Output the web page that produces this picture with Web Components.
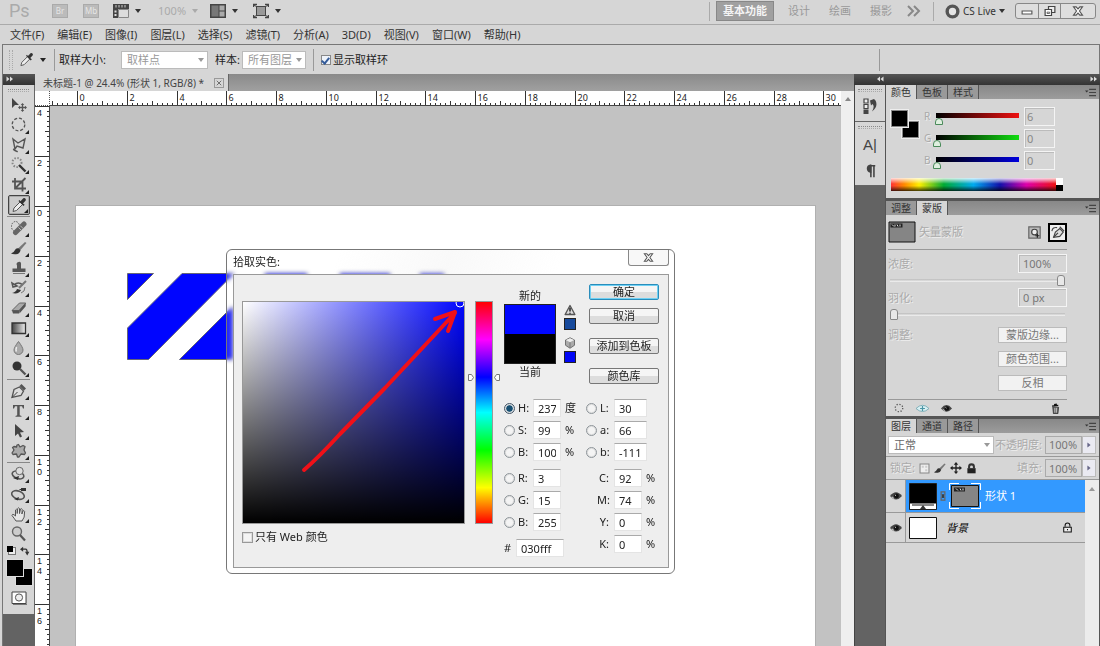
<!DOCTYPE html>
<html lang="zh-CN">
<head>
<meta charset="utf-8">
<title>未标题-1</title>
<style>
html,body{margin:0;height:100%;overflow:hidden;background:#d6d6d6}
body{font:11px/16px "Noto Sans","Noto Sans CJK SC",sans-serif;color:#222}
</style>
</head>
<body>
<ps-app></ps-app>
<script>
const BASE = `*{box-sizing:border-box}
:host{display:block}
button,input,select{font:inherit;color:inherit;margin:0;padding:0;border:0;background:none;border-radius:0;outline:none}
select,input[type=checkbox],input[type=radio],input[type=range]{appearance:none;-webkit-appearance:none}
svg{display:block}`;
function define(name, css, html, setup) {
  const t = document.createElement('template');
  t.innerHTML = `<style>${BASE}${css}</style>${html}`;
  customElements.define(name, class extends HTMLElement {
    constructor() {
      super();
      this.attachShadow({ mode: 'open' }).append(t.content.cloneNode(true));
    }
    connectedCallback() { if (setup) setup(this, this.shadowRoot); }
  });
}

/* Icon set, drawn on a 16 unit grid */
const G = 'fill="none" stroke="#555" ';
const ICONS = {
  move: '<path d="M1 1v10l3-3 4 0z" fill="#444"/><path d="M8 10.500h7M11.500 7v7" stroke="#555" stroke-width="1.300"/><path d="M7 10.500l2-1.700v3.400zM16 10.500l-2-1.700v3.400zM11.500 6l1.700 2h-3.400zM11.500 15l1.700-2h-3.400z" fill="#555"/>',
  marquee: `<circle cx="7.500" cy="7.500" r="6.300" ${G} stroke-width="1.300" stroke-dasharray="3 1.900"/>`,
  lasso: `<path d="M2 2l5 4 7-4-2 9-6-2-2 3zM4 12q-3 0 0 1.500t2 1" ${G} stroke-width="1.400"/>`,
  wand: `<circle cx="6" cy="5.500" r="4.500" fill="none" stroke="#888" stroke-width="2" stroke-dasharray="1.500 1.500"/><path d="M8 8l6.500 6.500" stroke="#333" stroke-width="2.400"/>`,
  crop: `<path d="M4 1v10.500h11M1 4.500h10.500v10M4 11.500L14.500 1" ${G} stroke-width="1.800"/>`,
  eyedrop: '<path d="M2 14.500l1-3.500 6-6 2.500 2.500-6 6z" fill="#eee" stroke="#555"/><path d="M7.500 4l5 5 1.200-1.200L12 6.500l2.700-3q.6-1.700-.8-2.300T11.600 2L9.500 4.300 8.500 3z" fill="#333"/>',
  heal: '<ellipse cx="4.500" cy="6.500" rx="4" ry="5" fill="none" stroke="#555" stroke-dasharray="1.500 1.200"/><path d="M4.500 12.500L13 4" stroke="#666" stroke-width="5" stroke-linecap="round"/><path d="M7.500 7.500l3 3M9.300 5.700l3 3" stroke="#bbb"/>',
  brush: '<path d="M7 8.500l7-6.500 1.500 1-6.500 7.500z" fill="#777"/><path d="M0 13.500q3-1 4-3.500t4-1.500l1.500 2q-1 3.500-4.500 3.700T0 13.500z" fill="#333"/>',
  stamp: '<path d="M6 8.500V5.500Q4.500 3 7.500 2T10 5.500v3h4.500V12h-13V8.500z" fill="#555"/><path d="M2 13.500h12" stroke="#777"/>',
  history: '<path d="M3 5q4-4 9 0M1 3l1 4 4-1z" fill="none" stroke="#555" stroke-width="1.500"/><path d="M15 1L8 8" stroke="#777" stroke-width="2"/><path d="M1 13q4-1 5-4l4 1q-2 4.500-9 3z" fill="#333"/><path d="M14 7q0 5-4 6" fill="none" stroke="#777"/>',
  eraser: '<path d="M1 10.500L8.500 3h6.200L8 10.500z" fill="#aaa" stroke="#666"/><path d="M1 10.500h7v3H2zM8 10.500L14.700 3v3.200L8.500 13.500z" fill="#555"/>',
  gradient: '<defs><linearGradient id="a"><stop stop-color="#444"/><stop offset="1" stop-color="#eee"/></linearGradient></defs><path d="M1 3h13.500v10.500H1z" fill="url(#a)" stroke="#333" stroke-width="1.300"/>',
  drop: '<path d="M7.500 1.500Q12 7.500 12 10a4.400 4.400 0 0 1-9 0Q3 7.500 7.500 1.500z" fill="#aaa" stroke="#777"/><path d="M5.500 7q-1 3 0 4.500" stroke="#eee" stroke-width="1.500" fill="none"/>',
  dodge: '<circle cx="6" cy="6" r="4.500" fill="#333"/><path d="M9 9l5.500 5.500" stroke="#555" stroke-width="2.300"/>',
  pen: '<path d="M1 14.500l2-8 5.500-2.500 4 4-2.500 4.500z" fill="#ddd" stroke="#555" stroke-width="1.300"/><path d="M1 14.500l5.500-5.500" stroke="#444"/><path d="M8.500 3L10.500 1l4.500 4.500-2 2z" fill="#555"/>',
  type: '<path d="M2 2h11v3.500h-1L11 3.300H8.700v9l1.800.6v.8h-6v-.8l1.700-.6v-9H4L3 5.500H2z" fill="#555"/>',
  select: '<path d="M4 1v12l3-2.500 2 4 2-1-2-4 4-.5z" fill="#444"/>',
  shape: '<path d="M6 2l1.500-.5L9 4l3-1.500 2 1L13 7l1.500 3-1 1.500-3.500-.5-2 3-1.500 0-1-3L2 11.500 1 10l2-3-1.500-2.500L3 3.500l2.500.5z" fill="#aaa" stroke="#555" stroke-width="1.300" stroke-linejoin="round"/>',
  rotate3d: '<ellipse cx="7" cy="9" rx="6" ry="3.500" transform="rotate(20 7 9)" fill="none" stroke="#555" stroke-width="1.600"/><circle cx="8.500" cy="5" r="3.700" fill="#ddd" stroke="#666"/><path d="M2 12l5 2 1-4z" fill="#333"/>',
  orbit3d: '<ellipse cx="7" cy="9" rx="6.500" ry="4" transform="rotate(20 7 9)" fill="none" stroke="#555" stroke-width="1.600"/><path d="M10 2h5v3h-5zM8.500 3h2v1h-2zM3 13l4 1.500L8 11z" fill="#333"/>',
  hand: '<path d="M5 15Q3 12 1 9.500q0-1.700 2-.8L4.500 10V4q1-1.500 1.700 0V7.500L6.700 2.500q1-1.500 1.800 0V7.500L9.500 3q1.200-1 1.700.4L10.900 8l1-3q1.200-1 1.700.4Q14 12 11 15z" fill="#e6e6e6" stroke="#555"/>',
  zoom: '<circle cx="6" cy="5.500" r="4.500" fill="#ccc" stroke="#666" stroke-width="1.400"/><path d="M9 9l5 5.500" stroke="#555" stroke-width="2.200"/>',
  swap: '<path d="M3 5h6q2.500 0 2.500 6" fill="none" stroke="#333" stroke-width="2"/><path d="M5 1L0 5l5 4zM8 9h7l-3.500 6z" fill="#333"/>',
  quick: '<path d="M1 2h14v11.500H1z" fill="#fff" stroke="#444"/><circle cx="8" cy="7.500" r="3.600" fill="#eee" stroke="#555"/><path d="M16 3v11.500H2" fill="none" stroke="#777"/>',
  eye: '<path d="M0 8q8-10 16 0-8 9.500-16 0z" fill="#444"/><circle cx="8.500" cy="8" r="3.300" fill="#111"/><path d="M2.500 9l3 2.500M6.500 6.500l1.500 1" stroke="#eee" stroke-width="1.200"/>',
  eyeblue: '<path d="M0 8q8-8 16 0-8 7.500-16 0z" fill="#d9f0f3" stroke="#6fa5b0"/><path d="M8 5v6M5 8h6" stroke="#4b96a6" stroke-width="1.500"/>',
  dotted: '<circle cx="8" cy="8" r="6" fill="none" stroke="#555" stroke-width="2" stroke-dasharray="2 2.700"/>',
  trash: '<path d="M4 6h8.500l-1 9.500H5z" fill="#666" stroke="#222"/><path d="M3 4.500l9-1M6 2.500l4-.8" stroke="#111" stroke-width="2"/><path d="M7 7v7M9.500 7v7" stroke="#ddd"/>',
  lock: '<path d="M2 7.500h12V15H2z" fill="#222"/><path d="M4.500 8V5.500q0-3.500 3.500-3.500t3.500 3.500V8" fill="none" stroke="#333" stroke-width="3"/>',
  lockline: '<path d="M2.500 7.500h11v7h-11z" fill="#eee" stroke="#111" stroke-width="1.500"/><path d="M4.500 7V5q0-3.500 3.500-3.500T11.500 5v2M8 10v2" fill="none" stroke="#111" stroke-width="1.500"/>',
  cross: '<path d="M8 2v12M2 8h12" stroke="#222" stroke-width="1.800"/><path d="M8 0l3 3.500H5zM8 16l3-3.500H5zM0 8l3.500-3v6zM16 8l-3.500-3v6z" fill="#222"/>',
  check: '<path d="M1.500 1.500h13v13h-13z" fill="#eee" stroke="#888" stroke-width="1.500"/><path d="M4 4h3v3H4zM9 9h3v3H9zM9 4h3v3H9z" fill="#ccc"/>',
  layout: '<path d="M0 1h16v5H0zM0 1h5v14H0z" fill="#444"/><path d="M5.500 6.500h10v8h-10z" fill="#ddd" stroke="#888"/><path d="M1.500 7.500h2v2h-2zM1.500 11h2v2h-2z" fill="#ddd"/><path d="M3 2v2.500M6 2v2.500M9 2v2.500M12 2v2.500" stroke="#ccc"/>',
  arrange: '<path d="M0 1h16v14H0z" fill="#444"/><path d="M1.500 2.500h7v11h-7z" fill="#777"/><path d="M9.500 2.500h5v5h-5zM9.500 8.500h5v5h-5z" fill="#aaa"/>',
  screen: '<path d="M3.500 3.500h9v9h-9z" fill="#999" stroke="#444"/><path d="M0.500 4V1.500H4M12 1.500h3.500V4M15.500 12v2.500H12M4 14.500H.5V12" fill="none" stroke="#444" stroke-width="1.500"/><path d="M1 2l3 2M15 2l-3 2M1 14l3-2M15 14l-3-2" stroke="#444"/>',
  ring: '<circle cx="8" cy="8" r="5.700" fill="#e4e4e4" stroke="#555" stroke-width="3.600"/>',
  chevs: '<path d="M2 3l5 5-5 5M8 3l5 5-5 5" fill="none" stroke="#888" stroke-width="2"/>',
  hist: '<path d="M2 1h4v4H2zM2 6.500h4v4H2z" fill="#eee" stroke="#444" stroke-width="1.200"/><path d="M1.500 11.500h5V16h-5z" fill="#444"/><path d="M8 2.500L12 1l1.500 1.500q3 6-3.500 11 3-5 .5-7.500L9 7.500z" fill="#444"/>',
  para: '<path d="M9 15V2M12.500 15V2M14 2H7" stroke="#444" stroke-width="1.800" fill="none"/><path d="M8.500 1.500A3.800 3.800 0 0 0 8.500 9z" fill="#444" stroke="#444" stroke-width="2"/>',
  warn: '<path d="M8 2l6.500 12h-13z" fill="#ddd" stroke="#555" stroke-width="1.800" stroke-linejoin="round"/><path d="M8 5v5M8 11.500v1.500" stroke="#222" stroke-width="2"/>',
  cube: '<path d="M8 1l6 3v7l-6 4-6-4V4z" fill="#aaa" stroke="#666" stroke-width="1.200"/><path d="M2.500 4L8 7l5.500-3L8 1.500z" fill="#eee"/><path d="M8 7v7" stroke="#666"/>',
  x: '<path d="M2 2.500h3.500L8 5.300l2.500-2.800H14L10 8l4 5.500h-3.500L8 10.700l-2.500 2.800H2L6 8z" fill="#fff" stroke="#555" stroke-width="1.500"/>',
  tabx: '<path d="M2 2l12 12M14 2L2 14" stroke="#666" stroke-width="2.500"/>',
  min: '<path d="M1.500 8h13v4h-13z" fill="#fff" stroke="#555" stroke-width="1.500"/>',
  restore: '<path d="M6 2h8.500v8H6z" fill="#eee" stroke="#444" stroke-width="1.600"/><path d="M1.500 6H10v8H1.500z" fill="#fff" stroke="#444" stroke-width="1.600"/><path d="M4 9.500h3.500v1.800H4z" fill="#fff" stroke="#444"/>',
  menu: '<path d="M0 5h5L2.500 8z" fill="#333"/><path d="M6 3.500h10M6 8h10M6 12.500h10" stroke="#444" stroke-width="1.700"/>',
  link: '<path d="M5 1.500h6v5H5zM5 9.500h6v5H5z" fill="none" stroke="#666" stroke-width="2"/><path d="M8 5v6" stroke="#222" stroke-width="2"/>',
  mask: '<path d="M1 1h14v14H1z" fill="#bbb" stroke="#666" stroke-width="1.500"/><circle cx="8" cy="7.500" r="3.500" fill="#eee" stroke="#444" stroke-width="1.500"/><path d="M9 12h5M11.500 9.500v5" stroke="#222" stroke-width="1.500"/>',
  vmask: '<path d="M3 14l2-6 5-4 4 4-4 5z" fill="#ddd" stroke="#444" stroke-width="1.300"/><path d="M3 14l5-5M10 2l5 5M1 7q1-5 6-4" stroke="#444" stroke-width="1.300" fill="none"/>',
  collapse: '<path d="M8 3L2 8l6 5zM15 3L9 8l6 5z" fill="#ddd"/>',
  expand: '<path d="M1 3l6 5-6 5zM8 3l6 5-6 5z" fill="#ddd"/>'
};
customElements.define('ps-icon', class extends HTMLElement {
  connectedCallback() {
    if (this.shadowRoot) return;
    const s = this.getAttribute('size') || 16;
    this.attachShadow({ mode: 'open' }).innerHTML =
      `<style>:host{display:block;flex:none;width:${s}px;height:${s}px}svg{display:block}</style>
       <svg width="${s}" height="${s}" viewBox="0 0 16 16" aria-hidden="true">${ICONS[this.getAttribute('name')]}</svg>`;
  }
});
define('drop-arrow', ':host{flex:none;width:0;height:0;border:3px solid transparent;border-top:4px solid currentColor;border-bottom:0}', '');
define('tool-grip', ':host{height:3px;border-top:1px dotted #888;border-bottom:1px dotted #aaa;margin:4px 4px}', '');

define('app-bar', `
:host{display:flex;align-items:center;height:24px;padding:0 4px 2px 9px;color:#333}
nav,.r{display:flex;align-items:center}
.logo{font:18px/22px Roboto,sans-serif;color:#aaa;width:43px}
.sq{width:16px;height:14px;font-size:8px;line-height:12px;justify-content:center;background:#bbb;border:1px solid #aaa;color:#e6e6e6}
.sq+.sq{margin-left:15px}
.g{color:#aaa;margin-left:17px;margin-right:10px;line-height:16px}
button{display:flex;align-items:center;gap:6px}
.r{margin-left:auto;color:#999}
.sep{width:1px;height:19px;background:#aaa}
.on{background:#a0a0a0;border:1px solid #888;color:#f4f4f4;font-weight:700;height:20px;padding:0 6px;margin:0 14px 0 6px}
.live{margin:0 10px 0 11px;color:#333;gap:3px;font-size:10px}
.win{display:flex;border:1px solid #888;border-radius:3px;height:16px;background:#dedede}
.win button{justify-content:center;width:22px}.win button+button{border-left:1px solid #888}.win button:last-child{width:35px}
`, `
<span class="logo">Ps</span>
<nav>
<button class="sq">Br</button><button class="sq">Mb</button>
<button style="margin-left:14px" aria-label="视图额外内容"><ps-icon name="layout"></ps-icon><drop-arrow></drop-arrow></button>
<button class="g">100%<drop-arrow></drop-arrow></button>
<button style="margin-left:2px" aria-label="排列文档"><ps-icon name="arrange"></ps-icon><drop-arrow></drop-arrow></button>
<button style="margin-left:15px" aria-label="屏幕模式"><ps-icon name="screen"></ps-icon><drop-arrow></drop-arrow></button>
</nav>
<div class="r"><i class="sep"></i><button class="on">基本功能</button>
<button>设计</button><button style="margin-left:19px">绘画</button><button style="margin-left:19px">摄影</button>
<button style="margin:0 11px 0 14px" aria-label="更多"><ps-icon name="chevs"></ps-icon></button><i class="sep"></i>
<button class="live"><ps-icon name="ring" size="15"></ps-icon>CS Live<drop-arrow></drop-arrow></button>
<div class="win"><button aria-label="最小化"><ps-icon name="min" size="12"></ps-icon></button><button aria-label="还原"><ps-icon name="restore" size="12"></ps-icon></button><button aria-label="关闭"><ps-icon name="x" size="12"></ps-icon></button></div></div>`);

define('menu-bar', `
:host{display:flex;align-items:center;gap:13px;height:20px;padding-left:10px;border-top:1px solid #aaa;color:#333}`,
['文件(F)','编辑(E)','图像(I)','图层(L)','选择(S)','滤镜(T)','分析(A)','3D(D)','视图(V)','窗口(W)','帮助(H)'].map(t => `<button>${t}</button>`).join(''));

define('options-bar', `
:host{display:flex;align-items:center;height:30px;margin-left:2px;padding:0 0 0 6px;border:1px solid #777;border-width:1px 1px 0 1px}
.sep{width:1px;height:22px;background:#999}
tool-grip{width:4px;height:20px;border:1px dotted #aaa;border-width:0 1px;margin:0 6px 0 0}
.sel{position:relative;display:flex;align-items:center;color:#999;margin:0 7px 0 2px}
select{height:18px;padding:0 5px;background:#fff;border:1px solid #bbb;width:64px;line-height:16px}
.sel.w{margin-left:15px}.w select{width:87px}
.sel drop-arrow{position:absolute;right:4px}
.cb{width:10px;height:10px;background:#eef3fa;border:1px solid #888;margin:0 2px 0 7px;display:grid;place-items:center}
.cb:checked::before{content:"";width:3px;height:6px;border:solid #345c9a;border-width:0 2px 2px 0;transform:rotate(40deg)}
.end{margin-left:auto;margin-right:219px}`, `
<tool-grip></tool-grip><ps-icon name="eyedrop" size="15"></ps-icon><drop-arrow style="margin:0 8px 0 6px"></drop-arrow><i class="sep"></i>
<label for="sz" style="margin-left:4px">取样大小:</label><span class="sel w"><select id="sz"><option>取样点</option></select><drop-arrow></drop-arrow></span>
<label for="sm">样本:</label><span class="sel"><select id="sm"><option>所有图层</option></select><drop-arrow></drop-arrow></span>
<i class="sep"></i><input class="cb" type="checkbox" id="rg" checked><label for="rg">显示取样环</label><i class="sep end"></i>`);

define('tool-button', `
button{display:grid;place-items:center;width:22px;height:20px;margin:0 auto;position:relative;border-radius:2px}
:host([active]) button{border:1px solid #444;background:#ccc;box-shadow:inset 0 0 0 1px #aaa}
:host([more]) button::after{content:"";position:absolute;right:1px;bottom:1px;border:2px solid transparent;border-right-color:#222;border-bottom-color:#222}`,
`<button></button>`, (h, r) => {
  const b = r.querySelector('button'), i = document.createElement('ps-icon');
  b.setAttribute('aria-label', h.getAttribute('icon'));
  i.setAttribute('name', h.getAttribute('icon'));
  b.replaceChildren(i);
});

const tools = (list) => list.split(' ').map(n => `<tool-button icon="${n}" ${n === 'zoom' || n === 'move' ? '' : 'more'} ${n === 'eyedrop' ? 'active' : ''}></tool-button>`).join('');
define('tool-box', `
:host{background:#636363;border-left:1px solid #777}
.head{height:11px;background:linear-gradient(#555,#333);padding:1px 3px}
.body{background:#d6d6d6;border-right:1px solid #666;padding-bottom:8px;display:flow-root}
tool-grip{margin:4px 5px 3px}
hr{border:0;border-top:1px solid #888;margin:1px 4px}
.mini{display:flex;justify-content:space-between;padding:2px 4px 0;height:14px}
.dd{width:6px;height:6px;background:#000;box-shadow:2px 2px 0 #eee,2px 2px 0 1px #777}
.sw{display:grid;width:25px;height:25px;margin:2px 0 5px 4px}
.sw i{grid-area:1/1;width:16px;height:16px;background:#000;outline:1px solid #ddd}
.sw i:first-child{place-self:end}
.sw i:last-child{z-index:1}`, `
<div class="head"><ps-icon name="expand" size="8"></ps-icon></div>
<div class="body"><tool-grip></tool-grip>
${tools('move marquee lasso wand crop eyedrop')}<hr>${tools('heal brush stamp history eraser gradient drop dodge')}<hr>
${tools('pen type select shape')}<hr>${tools('rotate3d orbit3d hand zoom')}
<div class="mini"><i class="dd"></i><ps-icon name="swap" size="10"></ps-icon></div>
<div class="sw"><i></i><i></i></div>
<ps-icon name="quick" style="margin:0 auto"></ps-icon></div>`);

/* Ruler: labels every two units, one minor tick per fifth of a unit */
customElements.define('doc-ruler', class extends HTMLElement {
  connectedCallback() {
    if (this.shadowRoot) return;
    this.attachShadow({ mode: 'open' }).innerHTML = `<style>:host{display:block;overflow:hidden;background:#fff;
      border:0 solid #444;border-bottom-width:1px}:host([vertical]){border-width:0 1px 0 0}
      svg{display:block;width:100%;height:100%}
      text{font:9px "Noto Sans",sans-serif;fill:#222}:host([vertical]) text{font-family:"Liberation Sans",sans-serif}</style><svg></svg>`;
    this.draw();
    new ResizeObserver(() => this.draw()).observe(this);
  }
  draw() {
    const v = this.hasAttribute('vertical'), o = +this.getAttribute('origin'), u = 24.88;
    const box = this.getBoundingClientRect(), size = v ? box.height : box.width;
    let d = '', t = '';
    for (let k = -20; ; k++) {
      const p = Math.round(o + k * u / 5) + .5;
      if (p < 0) continue;
      if (p > size) break;
      const len = k % 10 === 0 ? 15 : k % 5 === 0 ? 5 : 3;
      d += v ? `M${15 - len} ${p}h${len}` : `M${p} ${15 - len}v${len}`;
      if (k % 10) continue;
      const n = String(Math.abs(k / 5));
      if (v) [...n].forEach((c, i) => { if (p + 12 + i * 10 < size) t += `<text x="2" y="${p + 9 + i * 10}">${c}</text>`; });
      else if (p + 14 < size) t += `<text x="${p + 2}" y="10">${n}</text>`;
    }
    this.shadowRoot.querySelector('svg').innerHTML = `<path d="${d}" stroke="#333"/>${t}`;
  }
});

define('doc-window', `
:host{display:grid;grid-template-rows:17px 1fr;min-width:0}
.tabs{background:linear-gradient(#8a8a8a,#a0a0a0)}
.tab{display:inline-flex;align-items:center;gap:10px;height:17px;padding:0 4px 0 8px;background:#d6d6d6;border-right:1px solid #666;color:#444;font-size:10px;vertical-align:top}
.tab button{width:10px;height:10px;border:1px solid #999;display:grid;place-items:center}
.view{display:grid;grid-template:15px 1fr/15px 1fr 13px;min-height:0}
.corner{background:#fff;border-right:1px dotted #555;border-bottom:1px dotted #555}
.bar{grid-area:1/3/3/4;background:#efefef;color:#888;display:flex;justify-content:center;padding-top:6px}
.bar drop-arrow{transform:rotate(180deg)}
.canvas{position:relative;background:#c2c2c2;padding:100px 26px 0;overflow:hidden;display:grid}
.page{background:#fff;box-shadow:0 0 0 1px #b0b0b0;padding:67px 0 0 51px}
color-picker{position:absolute;left:176px;top:143px}`, `
<div class="tabs"><span class="tab">未标题-1 @ 24.4% (形状 1, RGB/8) *<button aria-label="关闭"><ps-icon name="tabx" size="6"></ps-icon></button></span></div>
<div class="view"><i class="corner"></i><doc-ruler origin="27"></doc-ruler><i class="bar"><drop-arrow></drop-arrow></i>
<doc-ruler vertical origin="100"></doc-ruler>
<div class="canvas"><div class="page"><svg width="320" height="87" fill="#0005ff" stroke="#667" stroke-width="1">
<path d="M.5.5h26l-26 26zM.5 55L55 .5h52L21.500 86.500H.5zM52.500 86.500L105 34h1v52.500z"/><path d="M138 .5h42v40h-42zM213 .5h50v40h-50zM293 .5h24v40h-24z"/></svg></div>
<color-picker></color-picker></div></div>`);

const radio = (id, l, v, u, on) => `<input type="radio" name="ch" id="r${id}" ${on ? 'checked' : ''}><label for="r${id}">${l}:</label><input class="t" aria-label="${l}" value="${v}"><span>${u}</span>`;
const cmyk = (l, v) => `<label class="k" for="k${l}">${l}:</label><input class="t s" id="k${l}" value="${v}"><span>%</span>`;
define('color-picker', `
:host{width:449px;border:1px solid #777;border-radius:6px;background:linear-gradient(110deg,rgba(255,255,255,.15) 0 20%,rgba(235,235,235,.3) 40%,rgba(255,255,255,.15) 60%);backdrop-filter:blur(2px);padding:0 5px 5px 6px;color:#222}
header{display:flex;justify-content:space-between;height:24px}
h1{font:inherit;margin:4px 0 0}
header button{width:41px;height:16px;border:1px solid #888;border-top:0;border-radius:0 0 3px 3px;background:#f8f8f8;display:grid;place-items:center}
.in{display:grid;grid-template-columns:223px 18px 160px;column-gap:10px;border:1px solid #999;background:#eee;padding:26px 0 0 8px;height:294px;align-content:start}
.field{position:relative;height:223px;border:1px solid #999;background:linear-gradient(transparent,#000),linear-gradient(90deg,#fff,#0006ff)}
.field svg{position:absolute;left:0;top:0}
.hue{position:relative;height:223px;border:1px solid #999;background:linear-gradient(red,#f0f 17%,#00f 34%,#0ff 50%,#0f0 67%,#ff0 84%,red)}
.hue svg{position:absolute;left:-9px;top:71px}
.web{display:flex;align-items:center;gap:2px;height:24px;margin-top:1px}
input[type=checkbox]{width:11px;height:11px;border:1px solid #999;background:#f4f4f4;box-shadow:inset 0 0 0 1px #ddd}
.right{margin-top:-17px;padding-left:1px}
.top{display:grid;grid-template-columns:52px 13px 70px;column-gap:7px;height:107px}
.prev{text-align:center;margin-top:4px;line-height:16px}
.prev i{display:block;border:1px solid #222;height:60px;background:linear-gradient(#0006ff 50%,#000 50%)}
.warn{padding-top:20px;display:grid;justify-items:center;align-content:start;row-gap:2px}
.warn i{width:12px;height:12px;border:1px solid #222}
.warn i:nth-child(2){background:#174a9c;margin-bottom:5px}.warn i:last-child{background:#0006f6}
.btns{display:grid;align-content:start;margin-left:6px}
.btns button{width:70px;height:16px;line-height:14px;border:1px solid #777;border-radius:2px;background:linear-gradient(#f5f5f5 50%,#ddd 50%);margin-bottom:8px;white-space:nowrap}
.btns button:first-child{border-color:#2a8dbb;box-shadow:inset 0 0 0 1px #6fd0f3}
.btns button:nth-child(n+2){margin-bottom:14px}
.vals{display:grid;grid-template-columns:96px 1fr;margin-top:8px}
.row{display:flex;align-items:center;height:18px;margin-bottom:4px;white-space:nowrap}
.row.gap{margin-top:8px}
input[type=radio]{flex:none;width:11px;height:11px;border-radius:50%;border:1px solid #8d9499;background:#f4f4f4;box-shadow:inset 0 0 0 1px #ddd}
input[type=radio]:checked{background:radial-gradient(#174f72 0 45%,#d6e6ee 60%);border-color:#456}
.row label{width:18px;padding-left:3px}
.t{height:18px;background:#fff;border:1px solid #e4e4e4;border-top-color:#aaa;padding:0 4px;width:33px}
.l .t{width:28px}
.row span{padding-left:4px}
.r label{width:17px}.r input[type=radio]{margin-left:-14px}
.row label.k{padding:0 5px 0 0;text-align:right;width:17px;margin:0 0 0 -3px}
.t.s{width:28px}.l .hex{width:48px;margin-left:2px}
.l .row:last-child label{width:10px;padding:0}`, `
<header><h1>拾取实色:</h1><button aria-label="关闭"><ps-icon name="x" size="11"></ps-icon></button></header>
<div class="in">
<div><div class="field"><svg width="221" height="221"><circle cx="217" cy="1" r="4" fill="none" stroke="#fff"/><path d="M61 168Q76 155 97 132L142 86 212 11M192 17L212 10 205 29" fill="none" stroke="#f01018" stroke-width="4" stroke-linecap="round" stroke-linejoin="round"/></svg></div>
<div class="web"><input type="checkbox" id="w"><label for="w">只有 Web 颜色</label></div></div>
<div class="hue"><svg width="34" height="9" fill="#fff" stroke="#777"><path d="M1.500 1.500h3l2 3-2 3h-3zM32.500 1.500h-3l-2 3 2 3h3z"/></svg></div>
<div class="right"><div class="top"><div class="prev">新的<i></i>当前</div>
<div class="warn"><ps-icon name="warn" size="12"></ps-icon><i></i><ps-icon name="cube" size="12"></ps-icon><i></i></div>
<div class="btns"><button>确定</button><button>取消</button><button>添加到色板</button><button>颜色库</button></div></div>
<div class="vals"><div class="l">
<div class="row">${radio('H','H',237,'度',1)}</div><div class="row">${radio('S','S',99,'%')}</div><div class="row">${radio('V','B',100,'%')}</div>
<div class="row gap">${radio('R','R',3,'')}</div><div class="row">${radio('G','G',15,'')}</div><div class="row">${radio('B','B',255,'')}</div>
<div class="row gap"><label for="hx">#</label><input class="t hex" id="hx" value="030fff"></div></div>
<div class="r"><div class="row">${radio('L','L',30,'')}</div><div class="row">${radio('a','a',66,'')}</div><div class="row">${radio('b','b',-111,'')}</div>
<div class="row gap">${cmyk('C',92)}</div><div class="row">${cmyk('M',74)}</div><div class="row">${cmyk('Y',0)}</div><div class="row">${cmyk('K',0)}</div></div></div></div>
</div>`);

define('dock-strip', `
:host{background:#636363;border-left:1px solid #444}
div{background:#d6d6d6;display:flow-root;border-bottom:1px solid #666;padding-bottom:4px}
div+div{padding-bottom:1px}
tool-grip{margin:4px 3px 3px}
button{display:grid;place-items:center;width:100%;height:22px;font:15px/18px "Liberation Sans",sans-serif;color:#444}
div+div button{height:26px}`, `
<div><tool-grip></tool-grip><button aria-label="历史记录"><ps-icon name="hist"></ps-icon></button></div>
<div><tool-grip></tool-grip><button>A|</button><button aria-label="段落"><ps-icon name="para" size="14"></ps-icon></button></div>`);

define('ps-panel', `
:host{border:1px solid #555;border-width:0 1px 3px;background:#d6d6d6}
:host(:last-child){border-bottom:0}
.tabs{display:flex;height:14px;background:linear-gradient(#888,#9c9c9c);font-size:10px}
.tabs button{height:14px;line-height:14px;padding:0 5px;border-right:1px solid #555;color:#333;background:#999}
.tabs button.on{background:#d6d6d6}
.tabs ps-icon{margin:2px 3px 0 auto}`, `<div class="tabs"></div><slot></slot>`, (h, r) => {
  const t = r.querySelector('.tabs');
  t.innerHTML = h.getAttribute('tabs').split(' ').map((n, i) => `<button class="${i == (h.getAttribute('on') || 0) ? 'on' : ''}">${n}</button>`).join('') + '<ps-icon name="menu" size="11"></ps-icon>';
});

const chan = (l, v, c) => `<div class="ch"><label for="${l}">${l}</label><input type="range" aria-label="${l}" max="255" value="${v}" style="--c:${c}"><input class="n" id="${l}" value="${v}"></div>`;
define('color-panel', `
:host{padding:7px 35px 7px 5px}
.m{display:grid;grid-template-columns:28px minmax(0,1fr);column-gap:5px;margin-right:9px}
.sw{display:grid;width:28px;height:28px;margin-top:4px}
.sw i{grid-area:1/1;width:17px;height:17px;background:#000;border:1px solid #888;outline:1px solid #eee}
.sw i:first-child{place-self:end}.sw i:last-child{z-index:1}
.ch{display:flex;align-items:center;height:20px;margin-bottom:2px}
label{flex:none;width:12px;color:#aaa;text-shadow:1px 1px #eee;font-size:10px}
input[type=range]{flex:1;min-width:0;height:18px;background:linear-gradient(90deg,#000,var(--c)) 0 6px/100% 5px no-repeat;margin-right:5px}
input::-webkit-slider-thumb{-webkit-appearance:none;width:8px;height:7px;margin:11px 0 0 -3px;background:#dfefdf;border:1px solid #4a8a5a;border-radius:5px 5px 0 0}
.n{flex:none;width:31px;height:19px;border:1px solid #f4f4f4;padding-left:2px;color:#888;box-shadow:inset 1px 1px #bbb}
.spec{display:flex;height:13px;margin-top:6px;margin-right:1px}
.spec i{flex:1;background:linear-gradient(rgba(255,255,255,.85),transparent 45%,transparent 60%,rgba(0,0,0,.75)),linear-gradient(90deg,#f33,#f80 8%,#fe0 17%,#0a3 32%,#0ae 50%,#11a 66%,#d0a 82%,#e11)}
.spec b{flex:none;width:7px;background:linear-gradient(#fff 50%,#000 50%)}`, `
<div class="m"><div class="sw"><i></i><i></i></div><div>${chan('R',6,'#e11')}${chan('G',0,'#1d1')}${chan('B',0,'#00d')}</div></div>
<div class="spec"><i></i><b></b></div>`);

const thumb = '<svg width="28" height="22"><path d="M1 1h26v20H1z" fill="#858585" stroke="#111"/><path d="M2.500 2.500h12v4h-12z" fill="#222"/><path d="M4 3.500l2 2M7 3.500v2M9 3.500l1 2M12 3.500v2" stroke="#ddd"/></svg>';
define('mask-panel', `
:host{padding:6px 32px 0 2px;color:#aaa;text-shadow:1px 1px #eee}
.row{display:flex;align-items:center}
.a{padding-bottom:6px;border-bottom:1px solid #999;gap:3px}
.a button:first-of-type{margin-left:auto}.a button{width:19px;height:19px;display:grid;place-items:center}
.a button:last-child{border:2px solid #000;margin-left:1px;background:#eee}
.row input{margin-left:auto;width:49px;height:19px;border:1px solid #f4f4f4;box-shadow:inset 1px 1px #bbb;padding-left:4px;color:#777;text-shadow:none}
input[type=range]{display:block;width:100%;height:15px;background:linear-gradient(#bbb,#f4f4f4) 50% 6px/100% 3px no-repeat}
.rg{padding:0 2px}
input::-webkit-slider-thumb{-webkit-appearance:none;width:8px;height:11px;background:#e8e8e8;border:1px solid #888;border-radius:3px 3px 1px 1px}
.adj{display:flex;justify-content:space-between;margin-top:5px;padding-bottom:8px;border-bottom:1px solid #999}
.adj div{display:grid;row-gap:8px}
.adj button{width:69px;height:16px;line-height:14px;background:#f2f2f2;border:1px solid #bbb;color:#777;text-shadow:none;white-space:nowrap}
.foot{display:flex;align-items:center;height:16px;padding:0 6px;gap:12px}.foot ps-icon:last-child{margin-left:auto}`, `
<div class="row a">${thumb}<span>矢量蒙版</span><button aria-label="像素蒙版"><ps-icon name="mask" size="13"></ps-icon></button><button aria-label="矢量蒙版"><ps-icon name="vmask" size="14"></ps-icon></button></div>
<div class="row" style="margin-top:4px"><label for="d">浓度:</label><input id="d" value="100%"></div><div class="rg"><input type="range" aria-label="浓度" value="100"></div>
<div class="row"><label for="f">羽化:</label><input id="f" value="0 px"></div><div class="rg"><input type="range" aria-label="羽化" value="0"></div>
<div class="adj"><span>调整:</span><div><button>蒙版边缘...</button><button>颜色范围...</button><button>反相</button></div></div>
<div class="foot"><ps-icon name="dotted" size="10"></ps-icon><ps-icon name="eyeblue" size="13"></ps-icon><ps-icon name="eye" size="11"></ps-icon><ps-icon name="trash" size="11"></ps-icon></div>`);

define('layer-row', `
:host{display:flex;height:33px;border-bottom:1px solid #999}
:host(:not([selected])){height:30px}
.eye{width:20px;border-right:1px solid #999;display:grid;place-items:center;flex:none}
.main{flex:1;display:flex;align-items:center;padding:0 12px 0 3px;gap:4px}
:host([selected]) .main{background:#3399ff;color:#fff}`, `<div class="eye"><ps-icon name="eye" size="12"></ps-icon></div><div class="main"><slot></slot></div>`);

define('layers-panel', `
.bar{display:flex;align-items:center;height:24px;padding:0 3px 0 2px;border-bottom:1px solid #999;color:#aaa;text-shadow:1px 1px #eee;white-space:nowrap}
.bar+.bar{height:23px}
.sel{position:relative;display:flex;align-items:center;margin-right:auto;color:#999}
.sel select{width:106px;height:18px;padding-left:5px;background:#fff;border:1px solid #bbb;color:#666}
.sel drop-arrow{position:absolute;right:4px}
.bar input{width:37px;height:18px;border:1px solid #aaa;padding-left:3px;margin-left:3px;color:#777}
.bar button{width:14px;height:18px;background:#eaeaf2;border:1px solid #bbb;display:grid;place-items:center}
.bar button drop-arrow{transform:rotate(-90deg) scale(.8);color:#668}
.lock{display:flex;gap:4px;margin:0 auto 0 4px;align-items:center}
.list{display:flex}
.rows{flex:1}.sb{width:14px;height:100vh;background:#ececec;color:#999;padding-top:7px}
.sb drop-arrow{transform:rotate(180deg);margin:0 auto}
.t1{width:28px;height:27px;flex:none}
em{margin-left:5px;color:#000}`, `
<div class="bar"><span class="sel"><select aria-label="混合模式"><option>正常</option></select><drop-arrow></drop-arrow></span><label for="o">不透明度:</label><input id="o" value="100%"><button aria-label="不透明度滑块"><drop-arrow></drop-arrow></button></div>
<div class="bar"><span style="margin-left:2px">锁定:</span><span class="lock"><ps-icon name="check" size="11"></ps-icon><ps-icon name="brush" size="12"></ps-icon><ps-icon name="cross" size="12"></ps-icon><ps-icon name="lock" size="11"></ps-icon></span><label for="p">填充:</label><input id="p" value="100%"><button aria-label="填充滑块"><drop-arrow></drop-arrow></button></div>
<div class="list"><div class="rows">
<layer-row selected><svg class="t1"><path d="M.5.5h27v26H.5z" fill="#000" stroke="#222"/><path d="M1 20.500h26v5.500H1z" fill="#fff"/><path d="M3 22h22" stroke="#111"/><path d="M14 22l3 4h-6z" fill="#333"/></svg>
<ps-icon name="link" size="10" style="margin:0 -3px"></ps-icon><svg width="32" height="26"><path d="M2.500 2.500h27v21h-27z" fill="#858585" stroke="#111"/><path d="M5 4.500h11v4H5z" fill="#222"/><path d="M7 5.500l2 2M11 5.500l1 2M14 5.500v2" stroke="#ddd"/><path d="M.5 7V.5H10M22 .5h9.500V7M31.500 19v6.500H22M10 25.500H.5V19" fill="none" stroke="#fff"/></svg><span>形状 1</span></layer-row>
<layer-row><svg width="28" height="22"><path d="M.5.5h27v21H.5z" fill="#fff" stroke="#111"/></svg><em>背景</em><ps-icon name="lockline" size="11" style="margin-left:auto"></ps-icon></layer-row>
</div><div class="sb"><drop-arrow></drop-arrow></div></div>`);

define('ps-app', `
:host{display:flex;flex-direction:column;height:100vh;background:#d6d6d6;overflow:hidden}
main{flex:1;min-height:0;display:grid;grid-template-columns:33px minmax(0,1fr) 246px;margin-left:2px;overflow:hidden}
.dock{display:grid;grid-template:11px minmax(0,1fr)/31px minmax(0,1fr);min-height:0}
.head{grid-column:1/3;background:linear-gradient(#555,#333);display:flex;justify-content:space-between;padding:1px 2px 0 22px}
.panels{min-width:0;overflow:hidden;display:flex;flex-direction:column}
ps-panel{flex:none}ps-panel:last-child{flex:1}`, `
<app-bar></app-bar><menu-bar></menu-bar><options-bar></options-bar>
<main><tool-box></tool-box><doc-window></doc-window>
<aside class="dock"><div class="head"><ps-icon name="collapse" size="8"></ps-icon><ps-icon name="expand" size="8"></ps-icon></div>
<dock-strip></dock-strip>
<div class="panels"><ps-panel tabs="颜色 色板 样式"><color-panel></color-panel></ps-panel>
<ps-panel tabs="调整 蒙版" on="1"><mask-panel></mask-panel></ps-panel>
<ps-panel tabs="图层 通道 路径"><layers-panel></layers-panel></ps-panel></div></aside></main>`);
</script>
</body>
</html>
